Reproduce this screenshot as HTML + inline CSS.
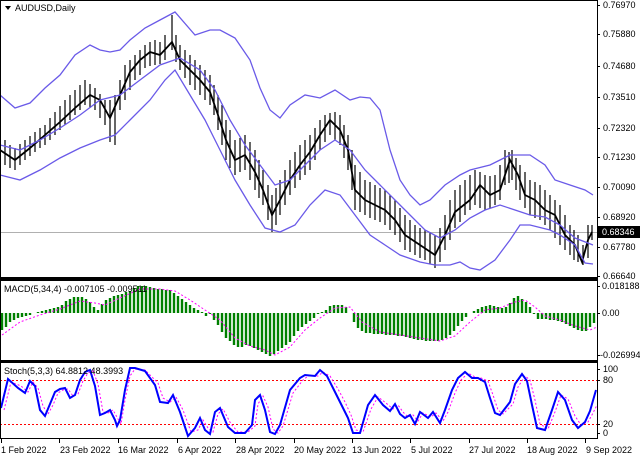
<!DOCTYPE html><html><head><meta charset="utf-8"><style>
html,body{margin:0;padding:0;background:#fff;}
svg text{font-family:"Liberation Sans","DejaVu Sans",sans-serif;font-size:9px;fill:#000;}
</style></head><body>
<svg width="640" height="457" xmlns="http://www.w3.org/2000/svg">
<rect width="640" height="457" fill="#fff"/>
<line x1="0" y1="232.5" x2="597" y2="232.5" stroke="#b0b0b0"/>
<path fill="none" stroke="#000" stroke-width="1.2" d="M5 140V165M10 145V168M15 148V170M20 144V165M25 140V160M30 136V156M35 132V152M40 128V148M45 125V145M50 118V140M55 112V135M60 106V130M65 100V125M70 95V120M75 90V115M80 85V110M85 80V105M90 84V108M95 88V110M100 94V118M105 100V125M110 100V142M115 95V145M120 80V110M125 65V100M130 60V90M135 55V80M140 50V75M145 45V68M150 42V66M155 40V65M160 42V64M165 35V60M172 15V50M176 35V62M180 45V70M185 50V78M190 55V85M195 60V90M200 65V95M205 70V100M210 75V105M214 85V115M218 95V130M222 105V145M226 120V160M230 130V168M235 140V175M240 138V172M245 135V170M250 142V180M255 150V190M259 160V198M263 170V205M268 185V220M272 195V232M276 188V225M280 180V215M285 170V205M290 160V195M295 152V188M300 145V180M305 140V175M310 135V170M315 128V160M320 120V150M325 115V142M330 113V135M335 112V140M340 115V145M344 125V158M348 135V170M352 150V190M355 165V210M360 172V212M365 180V215M370 182V218M375 185V220M380 188V222M385 190V225M390 195V230M395 200V235M400 208V242M405 215V250M410 220V252M415 225V255M420 228V258M425 230V260M430 232V264M435 235V268M440 228V262M445 215V250M450 200V240M455 190V228M460 185V222M465 180V215M470 175V210M475 170V205M480 172V208M485 175V210M490 176V208M495 175V205M500 165V200M505 150V185M509 152V183M512 150V180M516 158V190M520 165V200M525 172V208M530 180V215M535 182V218M540 185V220M545 190V225M550 195V230M555 200V238M560 205V245M565 215V250M570 225V255M574 230V260M578 235V262M583 245V265M588 225V258M592 225V240"/>
<polyline fill="none" stroke="#000" stroke-width="1.8" points="0,150 15,160 30,148 45,135 60,122 75,108 90,95 100,100 110,118 120,95 130,72 140,60 150,52 160,55 172,42 180,60 190,70 200,80 210,92 218,115 226,140 235,160 245,155 255,172 263,190 272,215 280,200 290,180 300,165 310,152 320,135 330,120 340,130 348,150 355,190 365,200 375,205 385,210 395,220 405,235 420,245 435,255 445,235 455,212 470,200 480,185 490,195 500,190 510,160 518,175 525,195 535,200 545,210 555,215 565,235 575,245 582,262 588,240 592,232"/>
<g fill="none" stroke="#6a5ae8" stroke-width="1.3">
<polyline points="0,95 15,108 30,103 45,88 60,75 75,55 90,45 100,50 110,52 120,50 130,40 145,28 160,20 175,12 195,35 210,30 220,30 235,38 250,60 260,88 270,110 280,118 290,105 305,95 320,98 335,90 350,100 360,97 370,98 380,110 390,150 400,180 410,195 420,205 430,200 445,185 460,175 470,170 490,165 500,160 510,155 530,155 545,165 555,180 570,185 585,190 593,195"/>
<polyline points="0,145 20,150 40,140 60,128 80,115 100,100 120,95 140,80 160,65 180,58 200,70 215,90 230,120 245,145 260,165 275,185 290,180 305,165 320,150 335,140 350,150 365,170 380,185 395,200 410,215 425,230 440,238 455,230 470,218 485,210 500,205 515,210 530,215 545,217 560,225 575,238 593,245"/>
<polyline points="0,175 20,180 40,170 60,158 80,148 100,140 115,135 130,120 150,100 165,80 175,70 190,95 205,120 220,150 235,180 250,205 265,228 280,232 295,225 310,205 325,190 340,195 355,215 370,235 385,245 400,255 420,262 435,265 450,265 460,262 470,268 480,270 495,260 510,240 520,225 530,225 550,230 560,235 575,245 585,263 593,264"/>
</g>
<path fill="none" stroke="#008000" stroke-width="2.4" d="M2 313V330M6 313V327M10 313V322M14 313V320M18 313V318M22 313V317M26 313V316M30 313V315M34 313V313M38 313V312M42 313V311M46 313V310M50 313V309M54 313V308M58 313V307M62 313V305M66 313V301M70 313V299M74 313V297M78 313V297M82 313V297M86 313V299M90 313V302M94 313V307M98 313V310M102 313V304M106 313V300M110 313V298M114 313V296M118 313V295M122 313V294M126 313V292M130 313V291M134 313V288M138 313V286M142 313V286M146 313V286M150 313V287M154 313V288M158 313V289M162 313V289M166 313V290M170 313V290M174 313V293M178 313V296M182 313V299M186 313V302M190 313V305M194 313V308M198 313V310M202 313V312M206 313V316M210 313V314M214 313V320M218 313V325M222 313V332M226 313V338M230 313V341M234 313V345M238 313V347M242 313V347M246 313V345M250 313V346M254 313V348M258 313V350M262 313V352M266 313V354M270 313V356M274 313V354M278 313V351M282 313V348M286 313V345M290 313V342M294 313V336M298 313V331M302 313V327M306 313V324M310 313V321M314 313V318M318 313V314M322 313V312M326 313V310M330 313V306M334 313V305M338 313V305M342 313V305M346 313V307M350 313V313M354 313V322M358 313V328M362 313V331M366 313V333M370 313V333M374 313V334M378 313V334M382 313V334M386 313V335M390 313V335M394 313V335M398 313V336M402 313V336M406 313V337M410 313V338M414 313V339M418 313V340M422 313V340M426 313V341M430 313V341M434 313V341M438 313V341M442 313V340M446 313V338M450 313V335M454 313V331M458 313V326M462 313V321M466 313V317M470 313V313M474 313V311M478 313V309M482 313V307M486 313V306M490 313V305M494 313V306M498 313V307M502 313V308M506 313V307M510 313V303M514 313V298M518 313V296M522 313V299M526 313V302M530 313V307M534 313V314M538 313V319M542 313V319M546 313V319M550 313V320M554 313V320M558 313V321M562 313V322M566 313V324M570 313V326M574 313V328M578 313V330M582 313V331M586 313V331M590 313V327M594 313V323"/>
<polyline fill="none" stroke="#ff00ff" stroke-dasharray="2,2" points="2,335 20,322 40,315 60,309 80,301 95,303 105,305 120,298 140,289 160,289 175,291 190,300 205,310 220,320 235,338 250,346 265,350 275,355 290,347 305,330 320,318 335,308 350,307 362,322 380,332 400,335 420,338 440,341 455,336 470,322 485,310 500,308 515,302 525,300 535,307 545,316 560,320 575,326 590,330 597,327"/>
<line x1="0" y1="380.5" x2="597" y2="380.5" stroke="#ff0000" stroke-dasharray="2,2"/>
<line x1="0" y1="424.5" x2="597" y2="424.5" stroke="#ff0000" stroke-dasharray="2,2"/>
<polyline fill="none" stroke="#ff00ff" stroke-dasharray="2,2" points="4,410 11,382 21,386 28,392 33,382 38,388 43,406 48,414 53,405 58,393 63,390 68,389 73,396 78,394 83,381 88,373 93,371 98,384 103,412 108,413 113,410 118,419 121,424 125,400 130,376 135,369 145,370 158,383 163,398 170,402 176,397 183,410 191,432 198,430 203,420 208,428 213,432 218,414 223,409 231,424 238,432 248,432 255,426 258,404 263,396 268,407 273,429 278,433 283,426 293,393 303,380 308,376 318,376 323,372 330,376 338,389 345,402 351,415 356,430 363,432 371,409 378,397 386,403 393,409 398,405 403,412 408,417 413,415 418,421 423,413 431,417 436,413 443,421 448,412 455,393 461,380 468,373 475,377 481,378 488,381 493,395 498,410 503,414 513,404 518,387 525,376 530,380 535,400 540,424 548,429 555,412 561,395 568,399 575,416 581,425 588,422 593,413 597,405"/>
<polyline fill="none" stroke="#0000ff" stroke-width="2" points="1,408 8,379 18,388 25,393 30,381 35,386 40,410 45,416 50,404 55,392 60,389 65,388 70,398 75,395 80,380 85,372 90,370 95,386 100,415 105,413 110,410 115,420 117,426 120,420 125,390 130,368 135,368 145,371 155,385 160,402 168,403 173,395 180,412 188,436 195,428 200,418 205,430 210,434 215,412 220,408 228,427 235,433 245,433 252,425 255,400 260,395 265,410 270,432 275,434 280,425 290,390 300,378 305,375 315,376 320,370 327,376 335,392 342,406 348,418 353,433 360,433 368,405 375,395 383,405 390,411 395,404 400,414 405,418 410,415 415,424 420,412 428,418 433,412 440,423 445,410 452,390 458,378 465,372 472,378 478,378 485,382 490,398 495,413 500,415 510,402 515,384 522,374 527,381 532,405 537,428 545,430 552,410 558,392 565,400 572,420 578,428 585,422 590,411 596,390"/>
<rect x="0.5" y="0.5" width="597" height="277" fill="none" stroke="#000"/>
<rect x="0.5" y="280.5" width="597" height="80" fill="none" stroke="#000"/>
<rect x="0.5" y="362.5" width="597" height="76" fill="none" stroke="#000"/>
<rect x="0" y="278" width="598" height="2" fill="#000"/>
<rect x="0" y="360" width="598" height="2" fill="#000"/>
<g stroke="#000">
<path d="M597 5.5H600M597 34.5H600M597 66.5H600M597 97.5H600M597 128.5H600M597 157.5H600M597 187.5H600M597 217.5H600M597 247.5H600M597 276.5H600M597 286.5H600M597 313.5H600M597 355.5H600M597 369.5H600M597 380.5H600M597 424.5H600M597 433.5H600"/>
<path d="M1.5 439V443M59.5 439V443M118.5 439V443M177.5 439V443M235.5 439V443M294.5 439V443M352.5 439V443M410.5 439V443M469.5 439V443M527.5 439V443M585.5 439V443"/>
</g>
<text x="603" y="8">0.76970</text>
<text x="603" y="37">0.75880</text>
<text x="603" y="69">0.74680</text>
<text x="603" y="100">0.73510</text>
<text x="603" y="131">0.72320</text>
<text x="603" y="160">0.71230</text>
<text x="603" y="190">0.70090</text>
<text x="603" y="220">0.68920</text>
<text x="603" y="250">0.67780</text>
<text x="603" y="279">0.66640</text>
<text x="602" y="289">0.018188</text>
<text x="602" y="316">0.00</text>
<text x="600" y="358">-0.026994</text>
<text x="603" y="372">100</text>
<text x="603" y="383">80</text>
<text x="603" y="427">20</text>
<text x="603" y="436">0</text>
<rect x="598" y="226" width="42" height="12" fill="#000"/>
<text x="602" y="235" style="fill:#fff">0.68346</text>
<text x="1" y="453">1 Feb 2022</text>
<text x="60" y="453">23 Feb 2022</text>
<text x="118" y="453">16 Mar 2022</text>
<text x="178" y="453">6 Apr 2022</text>
<text x="236" y="453">28 Apr 2022</text>
<text x="294" y="453">20 May 2022</text>
<text x="352" y="453">13 Jun 2022</text>
<text x="411" y="453">5 Jul 2022</text>
<text x="469" y="453">27 Jul 2022</text>
<text x="527" y="453">18 Aug 2022</text>
<text x="586" y="453">9 Sep 2022</text>
<path d="M5 6 L11 6 L8 10 Z" fill="#000"/>
<text x="15" y="11">AUDUSD,Daily</text>
<text x="4" y="292">MACD(5,34,4) -0.007105 -0.009511</text>
<text x="4" y="374">Stoch(5,3,3) 64.8812 48.3993</text>
</svg>
</body></html>
